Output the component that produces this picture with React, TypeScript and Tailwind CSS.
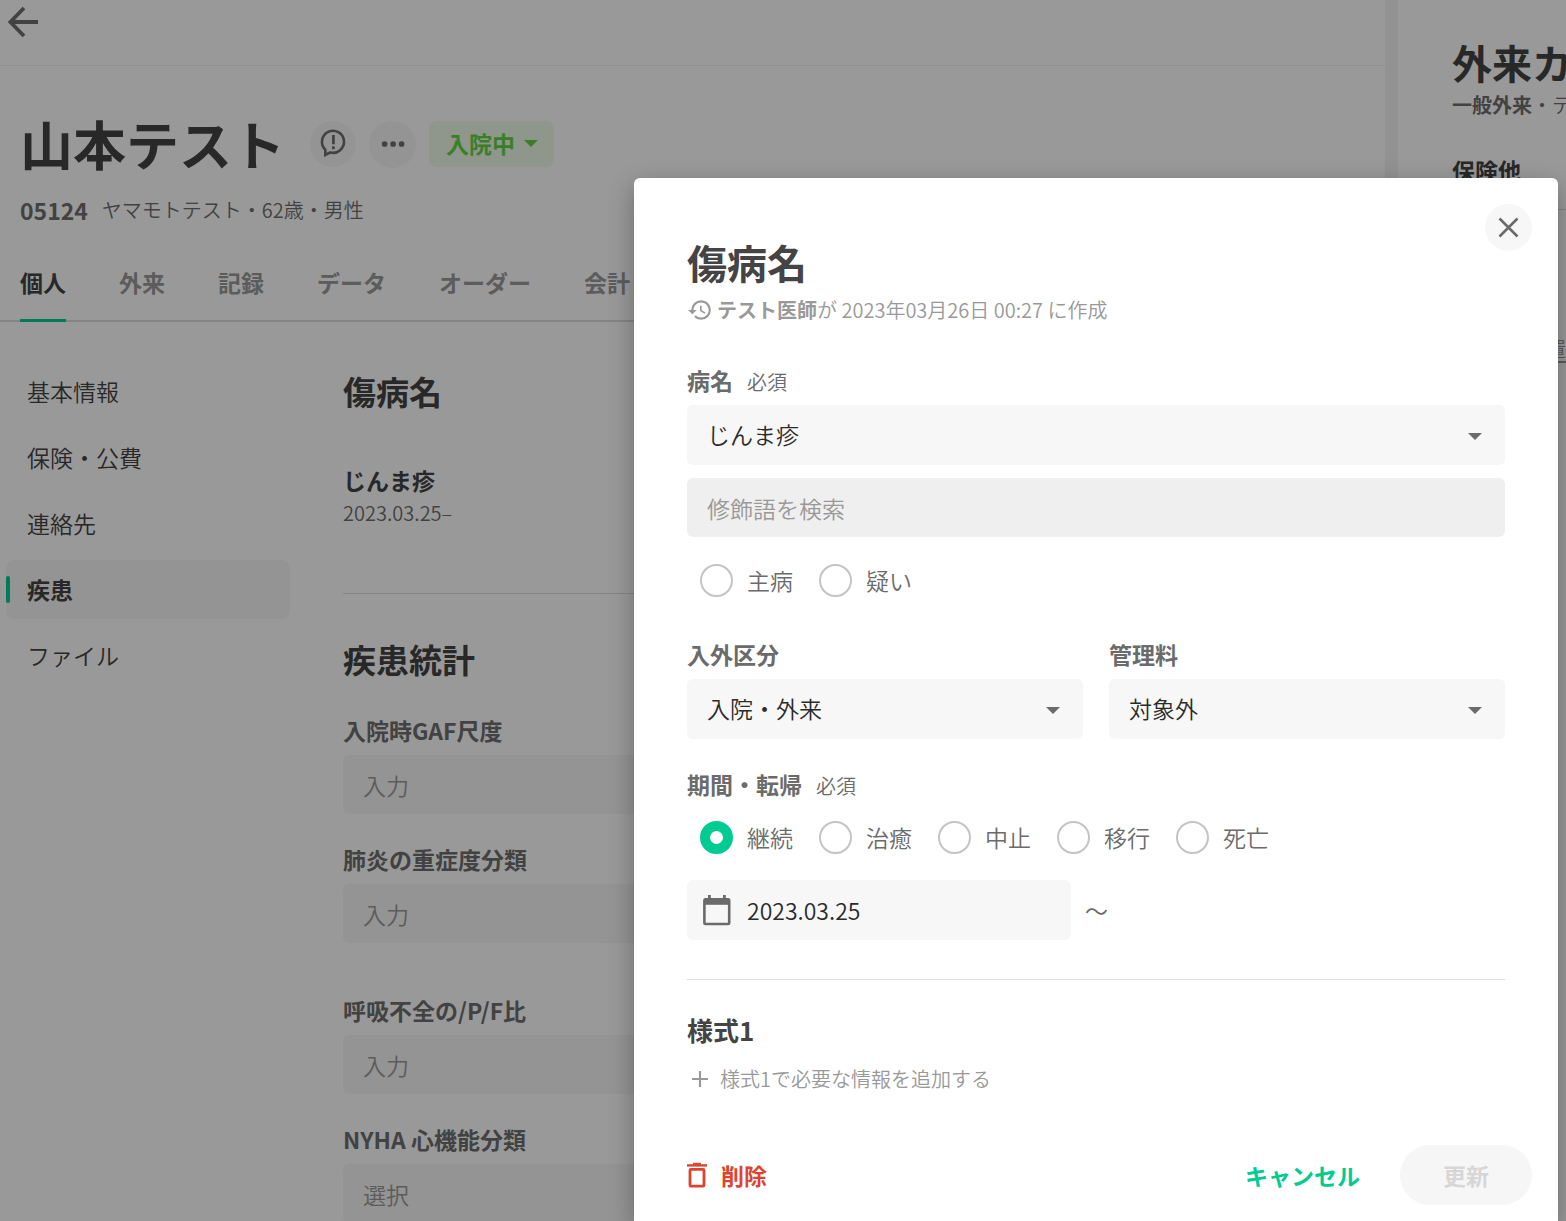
import { useState } from "react";
import type { ReactNode } from "react";
import clsx from "clsx";
import { MdHistory } from "react-icons/md";

const tabs = ["個人", "外来", "記録", "データ", "オーダー", "会計"];
const navItems = ["基本情報", "保険・公費", "連絡先", "疾患", "ファイル"];
const outcomes = ["継続", "治癒", "中止", "移行", "死亡"];

function CaretIcon({ className }: { className?: string }) {
  return (
    <svg viewBox="0 0 14 7" className={className} fill="currentColor" aria-hidden="true">
      <path d="M0 0h14L7 7z" />
    </svg>
  );
}

function BackIcon() {
  return (
    <svg
      viewBox="0 0 32 32"
      className="size-8"
      fill="none"
      stroke="currentColor"
      strokeWidth="3.8"
      aria-hidden="true"
    >
      <path d="M17 2 3.4 16 17 30M3 16h28" />
    </svg>
  );
}

function AlertBubbleIcon() {
  return (
    <svg viewBox="0 0 46 46" className="size-full" fill="none" stroke="currentColor" aria-hidden="true">
      <path d="M15.3 28.7v5.2l5-2.4A11 11 0 1 0 15.3 28.7z" strokeWidth="2.6" />
      <path d="M23.4 14v9.2M23.4 25.2v3" strokeWidth="2.7" />
    </svg>
  );
}

function MoreIcon() {
  return (
    <svg viewBox="0 0 46 46" className="size-full" fill="currentColor" aria-hidden="true">
      <circle cx="15.3" cy="22.5" r="2.8" />
      <circle cx="23.6" cy="22.5" r="2.8" />
      <circle cx="31.9" cy="22.5" r="2.8" />
    </svg>
  );
}

function CalendarIcon() {
  return (
    <svg viewBox="0 0 28 32" className="h-8 w-7" fill="none" stroke="currentColor" aria-hidden="true">
      <rect x="1.4" y="5.4" width="24.8" height="24.6" rx="1.2" strokeWidth="2.6" />
      <path d="M1.5 7.6h24.6" strokeWidth="6.4" />
      <path d="M6.4 1v4M21.4 1v4" strokeWidth="2.8" />
    </svg>
  );
}

function TrashIcon() {
  return (
    <svg viewBox="0 0 20 26" className="h-[26px] w-5" fill="none" stroke="currentColor" aria-hidden="true">
      <path d="M0 3.4h20" strokeWidth="2.4" />
      <path d="M6 1.8h8" strokeWidth="2" />
      <rect x="3" y="7.4" width="14" height="16.8" rx="1" strokeWidth="2.8" />
    </svg>
  );
}

function TextField({ id, label, placeholder }: { id: string; label: string; placeholder: string }) {
  return (
    <div className="flex flex-col gap-[9px]">
      <label htmlFor={id} className="text-[23px] leading-[32px] font-bold text-[#6f6f6f]">
        {label}
      </label>
      <input
        id={id}
        type="text"
        placeholder={placeholder}
        className="h-[59px] w-full rounded-md bg-[#f7f7f7] px-5 text-[23px] placeholder:text-[#999]"
      />
    </div>
  );
}

function FieldLabel({ htmlFor, required, children }: { htmlFor: string; required?: boolean; children: ReactNode }) {
  return (
    <label htmlFor={htmlFor} className="flex h-[34px] items-start gap-3.5 text-[#6b6b6b]">
      <span className="text-[23px] leading-[32px] font-bold">{children}</span>
      {required && <span className="text-[20px] leading-[36px]">必須</span>}
    </label>
  );
}

function SelectField({ id, value }: { id: string; value: string }) {
  return (
    <div className="relative mt-[7px]">
      <select
        id={id}
        defaultValue={value}
        className="h-[60px] w-full appearance-none rounded-md bg-[#f7f7f7] px-5 pb-0.5 text-[23px] text-[#2b2b2b]"
      >
        <option value={value}>{value}</option>
      </select>
      <CaretIcon className="pointer-events-none absolute top-7 right-[23px] h-[7px] w-3.5 text-[#6b6b6b]" />
    </div>
  );
}

function Radio({
  name,
  label,
  checked,
  onChange,
}: {
  name: string;
  label: string;
  checked: boolean;
  onChange: () => void;
}) {
  return (
    <label className="flex items-center gap-3.5 text-[23px] leading-[33px] text-[#6b6b6b]">
      <input
        type="radio"
        name={name}
        checked={checked}
        onChange={onChange}
        className="size-[33px] appearance-none rounded-full border-2 border-[#c4c4c4] bg-white checked:border-10 checked:border-[#00cc92]"
      />
      {label}
    </label>
  );
}

function PatientPage() {
  return (
    <div className="flex h-full bg-[#f4f4f4]">
      <main className="mr-[13px] min-w-0 flex-1 bg-white">
        <header className="h-[66px] border-b border-[#f2f2f2] px-[7px] pt-1.5">
          <button type="button" aria-label="戻る" className="block text-[#6f6f6f]">
            <BackIcon />
          </button>
        </header>

        <div className="px-5 pt-[38px]">
          <div className="flex h-20 items-center gap-[13px]">
            <h1 className="mr-3 pb-0.5 text-[53px] leading-[78px] font-bold text-[#444]">山本テスト</h1>
            <button type="button" aria-label="メモ" className="size-[46px] rounded-full bg-[#f7f7f7] text-[#6f6f6f]">
              <AlertBubbleIcon />
            </button>
            <button type="button" aria-label="その他" className="size-[47px] rounded-full bg-[#f7f7f7] text-[#6f6f6f]">
              <MoreIcon />
            </button>
            <button
              type="button"
              className="flex h-[46px] items-center gap-[9px] rounded-lg bg-[#eefae9] pr-4 pb-0.5 pl-[17px] text-[23px] font-bold text-[#5fd445]"
            >
              入院中
              <CaretIcon className="h-[7px] w-3.5" />
            </button>
          </div>
          <p className="mt-2 flex items-center gap-3.5 leading-[34px] text-[#6f6f6f]">
            <span className="text-[23px] font-bold">05124</span>
            <span className="text-[20px] leading-[36px]">ヤマモトテスト・62歳・男性</span>
          </p>
        </div>

        <nav className="mt-[37px] flex gap-[53px] px-5 shadow-[inset_0_-2px_0_#ddd]">
          {tabs.map((tab, i) => (
            <a
              key={tab}
              href="#"
              className={clsx(
                "border-b-3 pb-5 text-[23px] leading-[34px] font-bold",
                i === 0 ? "border-[#00cc92] text-[#444]" : "border-transparent text-[#999]"
              )}
            >
              {tab}
            </a>
          ))}
        </nav>

        <div className="flex">
          <nav className="mt-10 ml-1.5 flex w-[284px] shrink-0 flex-col gap-[7px]">
            {navItems.map((item) => (
              <a
                key={item}
                href="#"
                className={clsx(
                  "flex h-[59px] items-center rounded-lg text-[23px] text-[#444]",
                  item === "疾患" ? "bg-[#f7f7f7] font-bold" : "pl-[21px]"
                )}
              >
                {item === "疾患" && <span className="mr-[17px] h-[27px] w-1 rounded-xs bg-[#00cc92]" />}
                {item}
              </a>
            ))}
          </nav>

          <div className="mt-[47px] mr-[53px] ml-[53px] flex-1">
            <h2 className="text-[33px] leading-[44px] font-bold text-[#444]">傷病名</h2>
            <p className="mt-[50px] text-[23px] leading-[34px] font-bold text-[#444]">じんま疹</p>
            <p className="text-[20px] leading-[32px] text-[#6f6f6f]">2023.03.25–</p>
            <hr className="mt-16 border-[#ddd]" />
            <h2 className="mt-[43px] text-[33px] leading-[44px] font-bold text-[#444]">疾患統計</h2>
            <div className="mt-[33px] flex flex-col gap-[29px]">
              <TextField id="gaf" label="入院時GAF尺度" placeholder="入力" />
              <TextField id="pneumonia" label="肺炎の重症度分類" placeholder="入力" />
            </div>
            <div className="mt-[51px] flex flex-col gap-[29px]">
              <TextField id="pf-ratio" label="呼吸不全の/P/F比" placeholder="入力" />
              <TextField id="nyha" label="NYHA 心機能分類" placeholder="選択" />
            </div>
          </div>
        </div>
      </main>

      <aside className="w-[168px] overflow-hidden bg-white pt-[34px] pl-[54px] whitespace-nowrap">
        <h2 className="text-[40px] leading-[56px] font-bold text-[#444]">外来カ</h2>
        <p className="mt-1 text-[20px] leading-[22px] text-[#6f6f6f]">
          <span className="font-bold">一般外来</span>・テ
        </p>
        <h3 className="mt-[38px] text-[23px] leading-[32px] font-bold text-[#444]">保険他</h3>
        <hr className="mt-[23px] border-[#ddd]" />
        <a href="#" className="mt-[123px] block text-right text-[20px] leading-[32px] text-[#999] underline underline-offset-4">
          処置
        </a>
      </aside>
    </div>
  );
}

function DiseaseDialog() {
  const [kind, setKind] = useState("");
  const [outcome, setOutcome] = useState("継続");

  return (
    <section
      role="dialog"
      aria-modal="true"
      aria-labelledby="dialog-title"
      className="relative w-full max-w-[924px] rounded-t-md bg-white px-[53px] pt-14 shadow-[0_8px_26px_rgba(0,0,0,0.3)]"
    >
      <button
        type="button"
        aria-label="閉じる"
        className="absolute top-[26px] right-[26px] size-[47px] rounded-full bg-[#f7f7f7] text-[#6b6b6b]"
      >
        <svg viewBox="0 0 47 47" fill="none" stroke="currentColor" strokeWidth="2.6" aria-hidden="true">
          <path d="m14.5 14.5 18 18M32.5 14.5l-18 18" />
        </svg>
      </button>

      <h2 id="dialog-title" className="text-[40px] leading-[56px] font-bold text-[#444]">
        傷病名
      </h2>
      <p className="mt-1 flex items-center gap-1 text-[20px] leading-[32px] text-[#999]">
        <MdHistory className="size-[26px]" />
        <span>
          <span className="font-bold">テスト医師</span>が 2023年03月26日 00:27 に作成
        </span>
      </p>

      <div className="mt-[38px]">
        <FieldLabel htmlFor="disease" required>
          病名
        </FieldLabel>
        <SelectField id="disease" value="じんま疹" />
        <input
          type="text"
          aria-label="修飾語"
          placeholder="修飾語を検索"
          className="mt-[13px] block h-[59px] w-full rounded-md bg-[#efefef] px-5 text-[23px] placeholder:text-[#999]"
        />
        <div className="mt-[27px] flex gap-[26px] pl-[13px]">
          {["主病", "疑い"].map((label) => (
            <Radio key={label} name="kind" label={label} checked={kind === label} onChange={() => setKind(label)} />
          ))}
        </div>
      </div>

      <div className="mt-[41px] grid grid-cols-2 gap-[26px]">
        <div>
          <FieldLabel htmlFor="category">入外区分</FieldLabel>
          <SelectField id="category" value="入院・外来" />
        </div>
        <div>
          <FieldLabel htmlFor="fee">管理料</FieldLabel>
          <SelectField id="fee" value="対象外" />
        </div>
      </div>

      <div className="mt-[29px]">
        <FieldLabel htmlFor="start-date" required>
          期間・転帰
        </FieldLabel>
        <div className="mt-[19px] flex gap-[26px] pl-[13px]">
          {outcomes.map((label) => (
            <Radio
              key={label}
              name="outcome"
              label={label}
              checked={outcome === label}
              onChange={() => setOutcome(label)}
            />
          ))}
        </div>
        <div className="mt-[26px] flex items-center gap-3.5 text-[23px] text-[#6b6b6b]">
          <div className="flex h-[60px] w-[384px] items-center gap-4 rounded-md bg-[#f7f7f7] pl-4">
            <CalendarIcon />
            <input
              id="start-date"
              type="text"
              defaultValue="2023.03.25"
              className="min-w-0 flex-1 bg-transparent text-[#2b2b2b]"
            />
          </div>
          〜
        </div>
      </div>

      <hr className="mt-[39px] border-[#ddd]" />

      <h3 className="mt-8 text-[26px] leading-[36px] font-bold text-[#444]">様式1</h3>
      <button type="button" className="mt-[15px] flex items-center gap-[7px] text-[20px] leading-[32px] text-[#999]">
        <svg viewBox="0 0 26 26" className="size-[26px]" stroke="currentColor" strokeWidth="2.2" aria-hidden="true">
          <path d="M13 5v16M5 13h16" />
        </svg>
        様式1で必要な情報を追加する
      </button>

      <footer className="mt-[50px] -mr-[27px] flex items-center pb-4 text-[23px] font-bold">
        <button type="button" className="mr-auto flex items-center gap-3.5 text-[#db442e]">
          <TrashIcon />
          削除
        </button>
        <button type="button" className="mr-10 text-[#00cc92]">
          キャンセル
        </button>
        <button type="button" disabled className="h-[60px] w-[132px] rounded-full bg-[#f6f6f6] text-[#d6d6d6]">
          更新
        </button>
      </footer>
    </section>
  );
}

export default function App() {
  return (
    <div lang="ja" className="relative h-screen overflow-hidden font-['Noto_Sans_CJK_JP',sans-serif] font-[350]">
      <PatientPage />
      <div className="absolute inset-0 flex justify-end bg-black/40 pt-[178px] pr-2">
        <DiseaseDialog />
      </div>
    </div>
  );
}
